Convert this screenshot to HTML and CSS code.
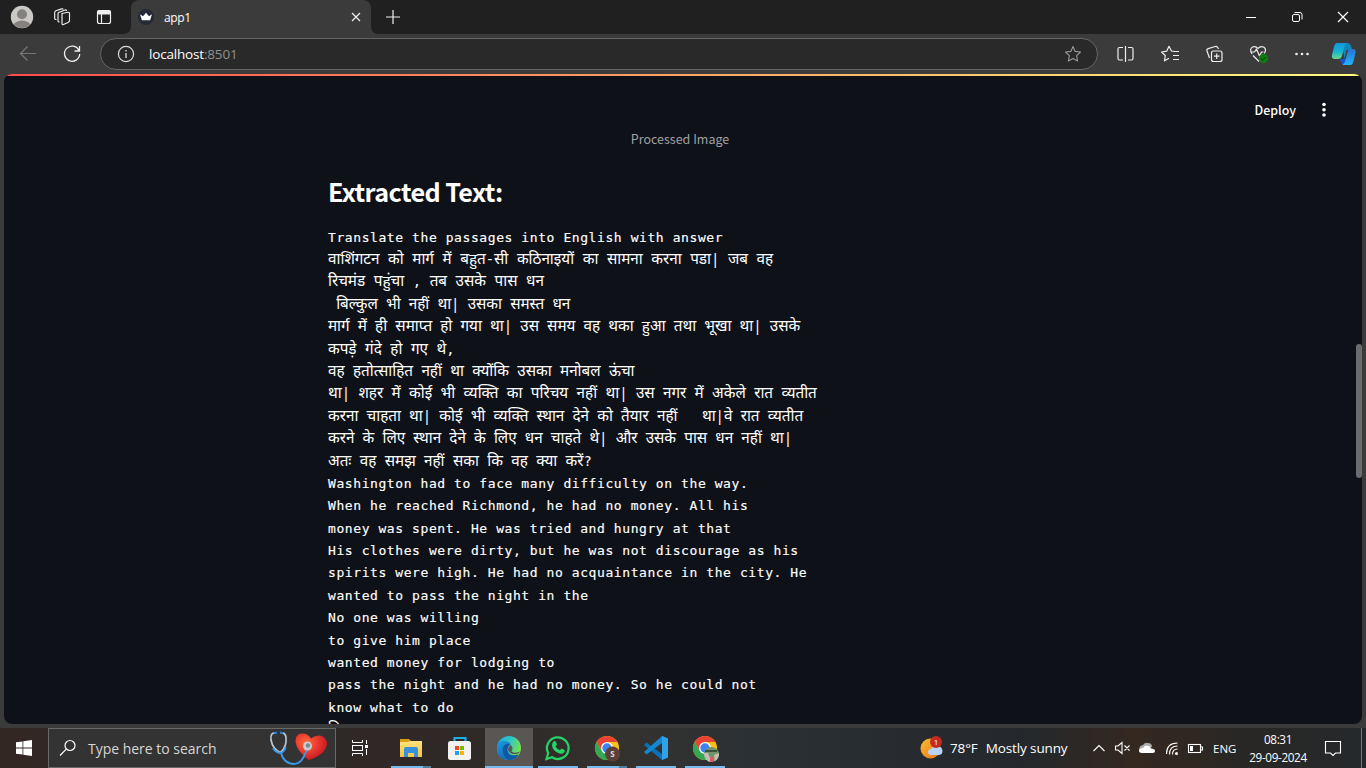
FILE: index.html
```html
<!DOCTYPE html>
<html lang="en">
<head>
<meta charset="utf-8">
<title>app1</title>
<link rel="stylesheet" href="styles.css">
</head>
<body>
<div class="screen">
  <header class="tabbar">
    <svg class="tab-tools" viewBox="0 0 131 34" fill="none" stroke="#eee" stroke-width="1.2">
      <clipPath id="av"><circle cx="22" cy="17" r="11"/></clipPath>
      <circle cx="22" cy="17" r="11.2" fill="#cbc9c6" stroke="none"/>
      <g clip-path="url(#av)" fill="#85817d" stroke="none"><circle cx="22" cy="14.3" r="5"/><ellipse cx="22" cy="26.5" rx="9" ry="6"/></g>
      <path d="M62 13.5l6-1.200q1.500-.2 1.500 1v7.500q0 1-1.500 1.700l-4.500 2q-1.500.5-1.500-1zM59.500 21.800q-1.500.3-1.500-1v-7q0-1 1.200-1.500l5.800-2.300q1.200-.4 1.700 1M56.500 19.500q-1.800.2-1.800-1V12.500q0-1.200 1.200-1.700l5.600-1.900q1.300-.3 1.800.7" stroke-width="1.150"/>
      <rect x="97.500" y="10.500" width="13" height="13" rx="2"/><path d="M97.500 12.500h13M101.500 14v9"/><path d="M98 11h12v3H98z" fill="#eee"/>
      <path d="M123 34q8 0 8-8v8z" fill="#3b3b3b" stroke="none"/>
    </svg>
    <div class="tab">
      <svg class="favicon" viewBox="0 0 16 16"><circle cx="8" cy="8" r="8" fill="#262936"/><path d="M2 5.300l3 1.900 3-3.400 3 3.400 3-1.900-1.900 6H3.900z" fill="#fff"/></svg>
      <span class="tab-title">app1</span>
      <svg class="tab-close" viewBox="0 0 10 10" stroke="#eee" stroke-width="1.200"><path d="M1 1l8 8M9 1L1 9"/></svg>
    </div>
    <svg class="tab-foot" viewBox="0 0 8 8" fill="#3b3b3b"><path d="M0 0q0 8 8 8H0z"/></svg>
    <svg class="new-tab" viewBox="0 0 14 14" stroke="#eee" stroke-width="1.200"><path d="M7 0v14M0 7h14"/></svg>
    <svg class="win-controls" viewBox="0 0 138 34" fill="none" stroke="#fff"><path d="M18 17.500h10"/><rect x="64.500" y="14.500" width="7" height="7" rx="1.500"/><path d="M66.500 12.500h5.500q2 0 2 2v5"/><path d="M110 12l10 10M120 12l-10 10" stroke-width="1.200"/></svg>
  </header>

  <div class="toolbar">
    <svg class="nav" viewBox="0 0 100 40" fill="none" stroke-width="1.200"><path d="M36 19.500H20.500M27.500 12.500l-7 7 7 7" stroke="#777"/><path d="M79 16.500a7.600 7.600 0 1 0 .7 3.500M79.500 12v5h-5" stroke="#eee" stroke-width="1.300"/></svg>
    <div class="address">
      <svg class="info" viewBox="0 0 18 18" fill="none" stroke="#ddd"><circle cx="9" cy="9" r="7.600" stroke-width="1.200"/><path d="M9 8v5M9 5v1.500" stroke-width="1.300"/></svg>
      <span class="url">localhost<span class="port">:8501</span></span>
      <svg class="star" viewBox="0 0 18 18" fill="none" stroke="#999" stroke-width="1.100" stroke-linejoin="round"><path d="M9 1.500l2.200 4.900 5.300.6-3.900 3.600 1 5.400L9 13.400 4.400 16l1-5.400L1.500 7l5.300-.6z"/></svg>
    </div>
    <svg class="actions" viewBox="0 0 268 40" fill="none" stroke="#eee" stroke-width="1.200" stroke-linejoin="round">
      <path d="M25 13.500h-3.500q-1.500 0-1.500 1.500v9.500q0 1.500 1.500 1.500H25M30 13.500h3.500q1.500 0 1.500 1.500v9.500q0 1.500-1.500 1.500H30M27.500 12v16"/>
      <path d="M76.500 17.500l-3-.5-2.500-4.700-2.300 4.900-5.200.8 3.800 3.500-.8 5.300 4.500-2.600M75 17.500h6M75 21.500h6M75 25.500h6"/>
      <rect x="113.500" y="17" width="10.500" height="10.500" rx="2"/><path d="M118.700 19.500v5.500M116 22.200h5.500M111.500 24l-2.500-7q-.5-1.800 1.200-2.300l7-2.200q1.500-.4 2.500 1l.8 1.500"/>
      <path d="M154 20q-3-5 .5-7 3-1.300 5.500 1.300 2.500-2.600 5.500-1.300 3.500 2 .8 6.500M155 21.500l6 6M152.500 18h4l2-3 3 7 2-4h2"/>
      <circle cx="165.500" cy="24.500" r="4.700" fill="#107c10" stroke="none"/><path d="M163 24.500l1.700 1.700 3-3" stroke="#074b07"/>
      <g fill="#eee" stroke="none"><circle cx="198.500" cy="20" r="1.300"/><circle cx="204" cy="20" r="1.300"/><circle cx="209.500" cy="20" r="1.300"/></g>
      <defs><linearGradient id="c1" x1="0" y1="0" x2="0" y2="1"><stop offset="0" stop-color="#1494df"/><stop offset=".55" stop-color="#18b5d0"/><stop offset="1" stop-color="#70d98b"/></linearGradient><linearGradient id="c2" x1="0" y1="0" x2="0" y2="1"><stop offset="0" stop-color="#2870d8"/><stop offset="1" stop-color="#1fb5fa"/></linearGradient></defs>
      <g stroke="none"><path d="M244 9h6q2 0 3 3l1.500 4h-6l-2 9z" fill="#1285b3"/><path d="M247 31q-3 0-4-3l-1-3h7l4-9 3 3-4 10q-1 2-3 2z" fill="#1752d2"/><path d="M239 9h10q-2 1-3 5l-2 8q-1 3-4 3h-3q-4 0-3-4l2-8q1-4 3-4z" fill="url(#c1)"/><path d="M251.500 15h3q4 0 3 4l-2 8q-1 4-3 4h-8q2-1 3-5l2-8q1-3 2-3z" fill="url(#c2)"/></g>
    </svg>
  </div>

  <main class="viewport">
    <div class="decoration"></div>
    <div class="app-header"><span>Deploy</span><svg class="kebab" viewBox="0 0 4 16" fill="#fff"><circle cx="2" cy="2.500" r="1.800"/><circle cx="2" cy="7.800" r="1.800"/><circle cx="2" cy="13" r="1.800"/></svg></div>
    <section class="block">
      <div class="caption">Processed Image</div>
      <h2 class="heading">Extracted Text:</h2>
      <div class="output">
        <div class="line">Translate the passages into English with answer</div>
        <div class="line hi loose">वाशिंगटन को मार्ग में बहुत<span class="mono">-</span>सी कठिनाइयों का सामना करना पडा| जब वह</div>
        <div class="line hi loose">रिचमंड पहुंचा <span class="mono">,</span> तब उसके पास धन</div>
        <div class="line hi tight"> बिल्कुल भी नहीं था| उसका समस्त धन</div>
        <div class="line hi tight">मार्ग में ही समाप्त हो गया था| उस समय वह थका हुआ तथा भूखा था| उसके</div>
        <div class="line hi loose">कपड़े गंदे हो गए थे<span class="mono">,</span></div>
        <div class="line hi">वह हतोत्साहित नहीं था क्योंकि उसका मनोबल ऊंचा</div>
        <div class="line hi">था| शहर में कोई भी व्यक्ति का परिचय नहीं था| उस नगर में अकेले रात व्यतीत</div>
        <div class="line hi tight">करना चाहता था| कोई भी व्यक्ति स्थान देने को तैयार नहीं   था|वे रात व्यतीत</div>
        <div class="line hi tight">करने के लिए स्थान देने के लिए धन चाहते थे| और उसके पास धन नहीं था|</div>
        <div class="line hi">अतः वह समझ नहीं सका कि वह क्या करें<span class="mono">?</span></div>
        <div class="line">Washington had to face many difficulty on the way.</div>
        <div class="line">When he reached Richmond, he had no money. All his</div>
        <div class="line">money was spent. He was tried and hungry at that</div>
        <div class="line">His clothes were dirty, but he was not discourage as his</div>
        <div class="line">spirits were high. He had no acquaintance in the city. He</div>
        <div class="line">wanted to pass the night in the</div>
        <div class="line">No one was willing</div>
        <div class="line">to give him place</div>
        <div class="line">wanted money for lodging to</div>
        <div class="line">pass the night and he had no money. So he could not</div>
        <div class="line">know what to do</div>
        <div class="line hi">कि</div>
      </div>
    </section>
    <div class="scroll-thumb"></div>
  </main>

  <footer class="taskbar">
    <svg class="start" viewBox="0 0 48 40" fill="#fff"><path d="M16 14.300l6.500-.9v6.200H16zM23.300 13.300l8.700-1.200v7.500h-8.700zM16 20.400h6.500v6.200l-6.500-.9zM23.300 20.400H32V28l-8.700-1.200z"/></svg>
    <div class="search">
      <svg class="lens" viewBox="0 0 18 18" fill="none" stroke="#fff" stroke-width="1.200"><circle cx="11" cy="6.500" r="5"/><path d="M7.300 10.200L1 16.500"/></svg>
      <span class="search-text">Type here to search</span>
      <svg class="health" viewBox="0 0 60 36" fill="none">
        <defs><radialGradient id="ht" cx=".35" cy=".35" r=".7"><stop offset="0" stop-color="#ff6d42"/><stop offset=".5" stop-color="#ed3b2f"/><stop offset="1" stop-color="#c01622"/></radialGradient></defs>
        <path d="M39.500 30Q28 21 26.500 12 26 4 32.500 3.500q6-.5 9.500 5 6.500-5 12.500-1.500 5.500 4 2.500 11-4 8-17.500 12z" fill="url(#ht)"/>
        <path d="M7 3Q1 2 2 10q2 10 9.500 12.500Q18 17 17 7q-1-5-5.500-4" stroke="#bcc6ce" stroke-width="1.700"/><path d="M4 18q3 5 8 5 4-2 4.500-6M12 23q3 11 13 11 9 0 13.500-17" stroke="#3d96e6" stroke-width="2"/><path d="M5 3.500l3-1M11 2.500l3 .8" stroke="#2c7ccf" stroke-width="2"/>
        <circle cx="38.500" cy="16" r="4.500" fill="#c9cbd0"/><circle cx="39" cy="15.500" r="2.200" fill="#848990"/>
      </svg>
    </div>
    <svg class="task-view" viewBox="0 0 48 40" fill="none" stroke="#fff"><path d="M16.500 12v2.500h10V12M16.500 28v-2.500h10V28M30.500 12v4M30.500 21v6"/><rect x="16.500" y="17.500" width="10" height="5"/><path d="M29 17h3v3h-3z" fill="#fff" stroke="none"/></svg>
    <svg class="apps" viewBox="0 0 350 40">
      <defs>
        <linearGradient id="fo" x1="0" y1="0" x2="0" y2="1"><stop offset="0" stop-color="#ffe27c"/><stop offset="1" stop-color="#f7c546"/></linearGradient>
        <linearGradient id="e1" x1="0" y1="0" x2="1" y2=".4"><stop offset="0" stop-color="#239edb"/><stop offset=".5" stop-color="#2dc5cc"/><stop offset="1" stop-color="#73de54"/></linearGradient>
        <linearGradient id="e2" x1="0" y1="0" x2="1" y2="1"><stop offset="0" stop-color="#1b9de2"/><stop offset="1" stop-color="#124f9e"/></linearGradient>
        <clipPath id="ph"><circle cx="326.500" cy="26.500" r="7.500"/></clipPath>
        <g id="chrome"><circle r="12" fill="#fbc116"/><path d="M-10.400-6A12 12 0 0 1 10.400-6L0-6-5.200 3z" fill="#ea4335"/><path d="M-10.400-6A12 12 0 0 0 0 12L5.200 3-5.200 3z" fill="#32a852"/><circle r="6" fill="#fff"/><circle r="4.700" fill="#3f82ef"/></g>
      </defs>
      <path d="M100 0h48v40h-48z" fill="#5a5654"/>
      <path d="M15 11h9l2 2h10v5H15z" fill="#dc9c12"/><path d="M15 14h8l2-1h12v16H15z" fill="url(#fo)"/><path d="M19 29v-8q0-2 2-2h10q2 0 2 2v8h-4v-4h-6v4z" fill="#3792db"/>
      <path d="M69.500 14v-4h11v4" fill="none" stroke="#1caee4" stroke-width="2.200"/><rect x="63" y="13" width="23" height="19" rx="2.500" fill="#f2f2f2"/><path d="M70 18h4v4h-4z" fill="#e94b23"/><path d="M75 18h4v4h-4z" fill="#7bb900"/><path d="M70 23h4v4h-4z" fill="#20a3e6"/><path d="M75 23h4v4h-4z" fill="#f9b400"/>
      <circle cx="124" cy="20" r="12" fill="url(#e1)"/>
      <path d="M112 20q0-7 6.500-7 5 0 7 3-5 0-5 5 0 6 6 7 4 .5 7-1.500-3 5.500-9.500 5.500-12 0-12-12z" fill="url(#e2)"/>
      <path d="M125.500 16q-6-1-7.500 4-1 7 5 11.500 7 1 10.500-5-8 2.500-10.500-2.500-1.500-5 2.500-8z" fill="#0f58a8"/>
      <path d="M125.500 17q-3.500 2.500-2 6 2.500 4.500 9.500 2.500l2.500-2q-5 2-8.500.5-.8-.7 0-1.800 1.500-3-1.500-5.200z" fill="#5a5654"/>
      <path d="M161.500 31l1.700-5.800A10.800 10.800 0 1 1 167 29.300z" fill="none" stroke="#25d366" stroke-width="2.200"/><path d="M168 14q2-2 3 0l1 2.500-1.500 2q2 3 4.500 3.800l1.500-1.800 3 1.500q.8.400 0 2-1.500 2.500-5 1.500-6-2-7.500-7.500 0-2.500 1-4z" fill="#25d366"/>
      <use href="#chrome" x="222" y="20"/><circle cx="227.500" cy="26" r="7.500" fill="#5c4038"/><text x="227.500" y="29" text-anchor="middle" class="badge-letter">S</text>
      <path d="M277 8l6 2.500v19L277 32 259 17l2.500-2.500 15.500 11.500z" fill="#0871b8"/><path d="M277 8l6 2.500v19L277 32z" fill="#2ea3ec"/><path d="M277 8v7l-15.500 11.500-2.500-2.500z" fill="#1787cd"/>
      <use href="#chrome" x="320" y="20"/>
      <g clip-path="url(#ph)"><path d="M318 18h18v18h-18z" fill="#72936a"/><path d="M318 25l5 0 4 10h-9z" fill="#c5bcb5"/><path d="M320 22h12v2h-12z" fill="#36533a"/><path d="M325 29h3v6h-3z" fill="#db5964"/><path d="M329 27l5-2v6l-4 3z" fill="#c8c0ae"/></g>
      <g fill="#76b9ed"><path d="M6 38h32v2H6zM100 38h48v2h-48zM153 38h40v2h-40zM202 38h32v2h-32zM251 38h40v2h-40zM300 38h40v2h-40z"/><path d="M38 38h8v2h-8zM234 38h8v2h-8z" fill="#547c9c"/></g>
    </svg>
    <div class="tray">
      <svg class="weather" viewBox="0 0 24 24"><defs><linearGradient id="su" x1="0" y1="0" x2="1" y2="1"><stop offset="0" stop-color="#fbbd2b"/><stop offset="1" stop-color="#ec731b"/></linearGradient></defs><circle cx="10.500" cy="12.500" r="10" fill="url(#su)"/><path d="M11 19q-3 0-3-3t3-3q2-4 6-2 5-1 5.500 4 0 4-4 4z" fill="#b9d3f7"/><circle cx="16" cy="6" r="6" fill="#c52b20"/><text x="16" y="9" text-anchor="middle" class="badge-number">1</text></svg>
      <span class="forecast"><span>78°F</span><span>Mostly sunny</span></span>
      <svg class="status" viewBox="0 0 120 40" fill="none" stroke="#fff" stroke-width="1.100">
        <path d="M7.500 23l5.500-5.500 5.500 5.500M29.500 18h2.500l4-3.500v11L32 22h-2.500zM38.500 17.500l5 5M43.500 17.500l-5 5"/>
        <g stroke="none"><path d="M53 23q0-6 4-6 2-3 5-2 4 0 4 4z" fill="#aaa"/><path d="M56 25q-3 0-3-2.500t4-2.500q2-3.500 5.500-2 2 0 2.500 2.500 4 0 4 2.500t-3 2z" fill="#fff"/></g>
        <path d="M80.500 26q0-11 11-11M83.500 26.500q0-8.500 8-8.500M86.500 26.500q0-5.500 5-5.500"/><circle cx="90.500" cy="25.500" r="1.500" fill="#fff" stroke="none"/>
        <rect x="102.500" y="16.500" width="12" height="8"/><path d="M114.500 19h2v3h-2"/><path d="M104 18h3v5h-3z" fill="#fff" stroke="none"/>
      </svg>
      <span class="lang">ENG</span>
      <div class="clock"><span>08:31</span><span>29-09-2024</span></div>
      <svg class="notify" viewBox="0 0 18 18" fill="none" stroke="#fff" stroke-width="1.100"><path d="M1.500 2.500h15v11.500h-5L9 16.500 6.500 14h-5z"/></svg>
    </div>
  </footer>
</div>
</body>
</html>
```
FILE: styles.css
```css
* { box-sizing: border-box; }
body { margin: 0; overflow: hidden; background: #3b3b3b; }
svg { display: block; flex: none; }
.screen { width: 1366px; height: 768px; display: flex; flex-direction: column; background: #3b3b3b; font-family: "Open Sans", "Noto Sans", sans-serif; color: #fff; }

.tabbar { height: 34px; flex: none; display: flex; align-items: center; background: #202020; }
.tab-tools { width: 131px; height: 34px; }
.tab { width: 240px; height: 34px; display: flex; align-items: center; padding: 0 10px 0 7px; background: #3b3b3b; border-radius: 8px 8px 0 0; }
.favicon { width: 16px; height: 16px; }
.tab-title { flex: 1; margin-left: 10px; font-size: 12px; letter-spacing: -0.4px; }
.tab-close { width: 10px; height: 10px; }
.tab-foot { width: 8px; height: 8px; align-self: flex-end; }
.new-tab { width: 14px; height: 14px; margin-left: 7px; }
.win-controls { width: 138px; height: 34px; margin-left: auto; }

.toolbar { height: 40px; flex: none; display: flex; align-items: center; background: #3b3b3b; }
.nav { width: 100px; height: 40px; }
.address { width: 998px; height: 32px; display: flex; align-items: center; padding: 0 15px 0 16px; border: 1px solid #666; border-radius: 16px; background: #292929; }
.info { width: 18px; height: 18px; }
.url { flex: 1; margin-left: 14px; font-size: 13.5px; letter-spacing: -0.18px; }
.port { color: #8f8f8f; }
.star { width: 18px; height: 18px; }
.actions { width: 268px; height: 40px; }

.viewport { position: relative; height: 650px; flex: none; margin: 0 4px 4px; overflow: hidden; border-radius: 8px; background: #0e1117; font-family: "Noto Sans CJK JP", sans-serif; }
.decoration { height: 2px; background: linear-gradient(90deg, #ff4b4b, #fffd80); }
.app-header { height: 54px; display: flex; align-items: flex-end; justify-content: flex-end; gap: 26px; padding: 0 36px 11px 0; font-size: 12.4px; font-weight: 500; line-height: 18px; }
.kebab { width: 4px; height: 16px; margin-bottom: 1px; }
.block { width: 704px; margin-left: 324px; }
.caption { height: 20px; line-height: 18px; text-align: center; font-size: 12.5px; color: #a0a1a3; }
.heading { margin: 25px 0 0; height: 34px; line-height: 32px; font-size: 25.2px; font-weight: 700; letter-spacing: -0.58px; }
.output { margin-top: 17.6px; font-family: "DejaVu Sans Mono", monospace; font-size: 13px; letter-spacing: 0.58px; -webkit-text-stroke: 0.15px #fff; }
.line { height: 22.4px; line-height: 22.4px; white-space: pre; }
.hi { line-height: 18.6px; font-family: "Noto Sans", "Noto Sans Devanagari", sans-serif; font-size: 15.25px; letter-spacing: 0; word-spacing: 4.4px; -webkit-text-stroke: 0; }
.tight { word-spacing: 4.2px; }
.loose { word-spacing: 4.6px; }
.mono { font-family: "DejaVu Sans Mono", monospace; font-size: 13.9px; line-height: 1; }
.scroll-thumb { position: absolute; right: 0; top: 270px; width: 6px; height: 134px; border-radius: 3px; background: #6b6c6f; }

.taskbar { height: 40px; flex: none; display: flex; background: linear-gradient(90deg, #332724 0%, #2f2927 36%, #34322f 46%, #2b3034 55%, #24282c 75%, #35281f 83%, #282725 91%, #25282b 100%); }
.start, .task-view { width: 48px; height: 40px; }
.search { width: 288px; display: flex; align-items: center; padding: 0 6px 0 10px; border: 1px solid #686868; background: #333; }
.lens { width: 18px; height: 18px; }
.search-text { flex: 1; margin-left: 11px; font-size: 14px; letter-spacing: -0.02px; color: #d6d6d6; }
.health { width: 60px; height: 36px; }
.apps { width: 350px; height: 40px; margin-left: 1px; }
.badge-letter { font: 700 8px "Open Sans", sans-serif; fill: #ddd; }
.badge-number { font: 8px "Open Sans", sans-serif; fill: #fff; }
.tray { flex: 1; display: flex; align-items: center; padding-left: 185px; margin-right: 4px; border-right: 1px solid #777; }
.weather { width: 24px; height: 24px; }
.forecast { display: flex; gap: 8px; width: 125px; margin-left: 6px; white-space: nowrap; font-size: 13.5px; letter-spacing: -0.12px; }
.status { width: 120px; height: 40px; margin-left: 11px; }
.lang { width: 30px; margin-left: 7px; font-size: 11.5px; }
.clock { width: 66px; margin-left: 2px; display: flex; flex-direction: column; align-items: center; font-size: 11.7px; line-height: 18px; letter-spacing: -0.35px; }
.notify { width: 18px; height: 18px; margin-left: auto; margin-right: 19px; }
```
